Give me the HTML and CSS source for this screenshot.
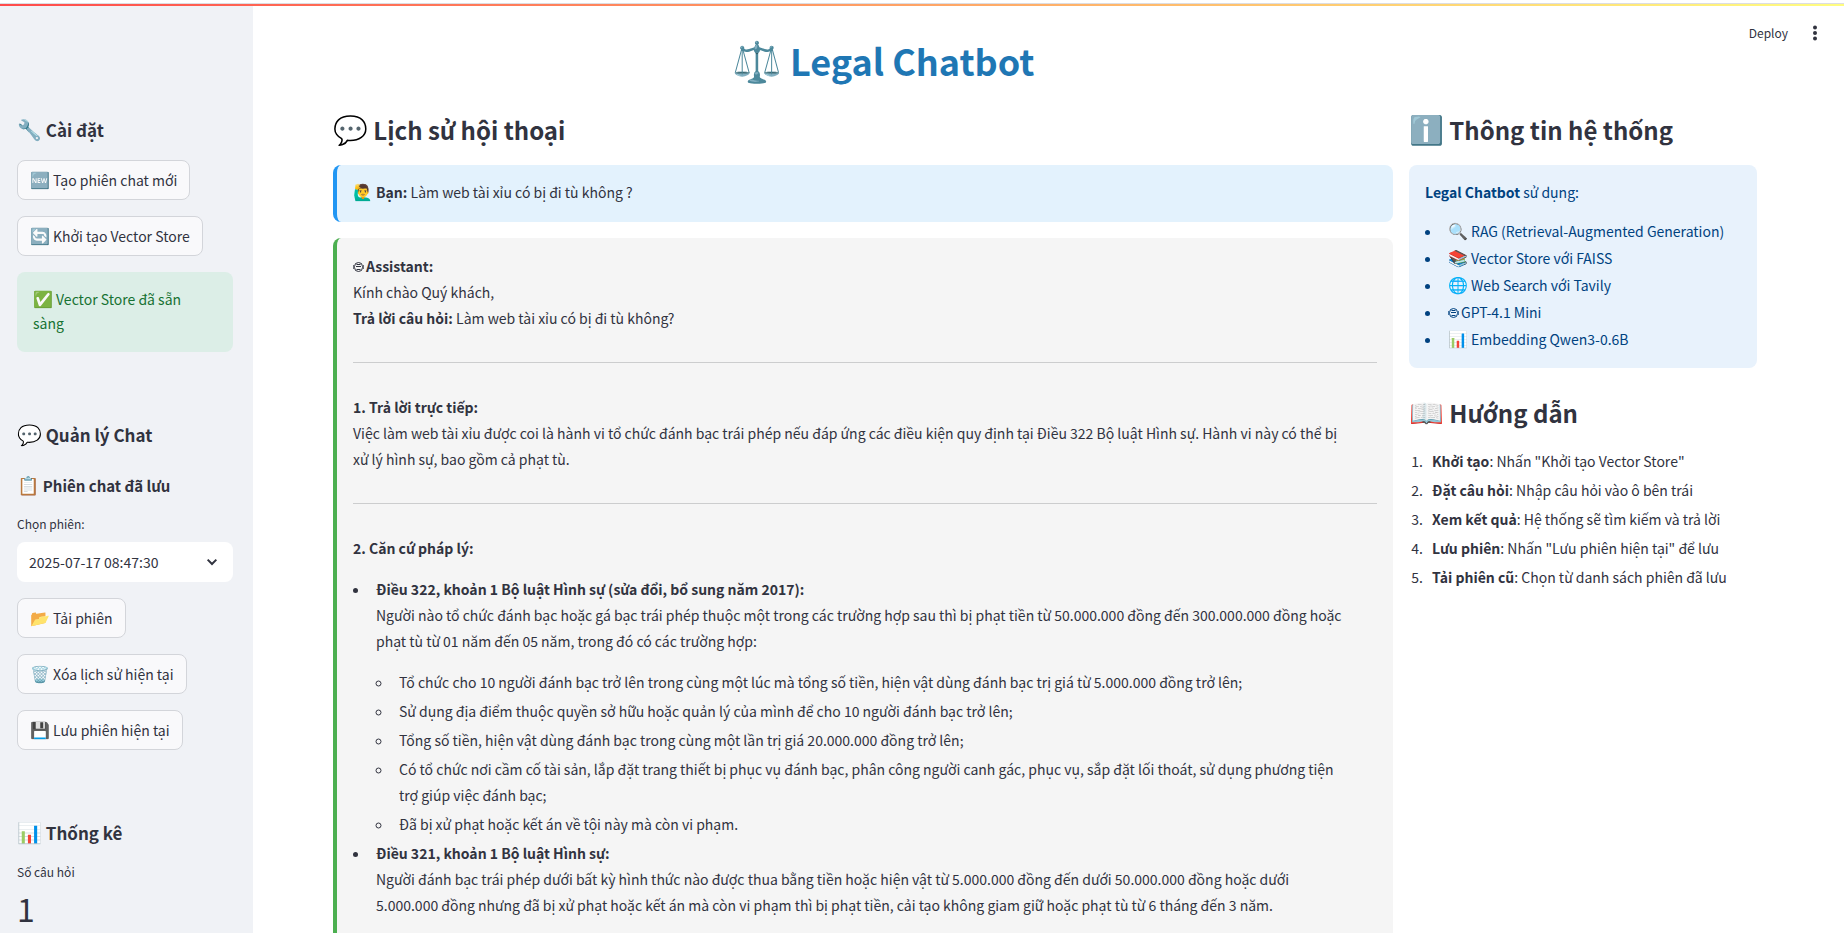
FILE: index.html
```html
<!DOCTYPE html>
<html lang="vi">
<head>
<meta charset="utf-8">
<title>Legal Chatbot</title>
<link rel="stylesheet" href="styles.css">
</head>
<body>
<div class="topbar"></div>
<div class="app">
<aside class="sidebar">
  <h2><span class="emoji">🔧</span> Cài đặt</h2>
  <button type="button"><span class="emoji">🆕</span> Tạo phiên chat mới</button>
  <button type="button"><span class="emoji">🔄</span> Khởi tạo Vector Store</button>
  <div class="success" role="status"><span class="emoji">✅</span> Vector Store đã sẵn sàng</div>
  <h2 class="section"><span class="emoji">💬</span> Quản lý Chat</h2>
  <h3><span class="emoji">📋</span> Phiên chat đã lưu</h3>
  <div class="field">
    <label for="session">Chọn phiên:</label>
    <div class="select-wrap">
      <select id="session"><option>2025-07-17 08:47:30</option></select>
      <svg class="chevron" viewBox="0 0 24 24" aria-hidden="true"><path d="M5.500 8.500 12 15l6.500-6.500" fill="none" stroke="currentColor" stroke-width="3"/></svg>
    </div>
  </div>
  <button type="button"><span class="emoji">📂</span> Tải phiên</button>
  <button type="button"><span class="emoji">🗑️</span> Xóa lịch sử hiện tại</button>
  <button type="button"><span class="emoji">💾</span> Lưu phiên hiện tại</button>
  <h2 class="section"><span class="emoji">📊</span> Thống kê</h2>
  <div class="metric"><div class="metric-label">Số câu hỏi</div><div class="metric-value">1</div></div>
</aside>
<main class="main">
  <div class="toolbar">
    <button type="button" class="plain">Deploy</button>
    <button type="button" class="plain" aria-label="Menu"><svg class="dots" viewBox="0 0 4 16" aria-hidden="true"><circle cx="2" cy="2.500" r="2"/><circle cx="2" cy="8" r="2"/><circle cx="2" cy="13.500" r="2"/></svg></button>
  </div>
  <h1><span class="emoji">⚖️</span> Legal Chatbot</h1>
  <div class="columns">
    <section class="chat">
      <h2><span class="emoji">💬</span> Lịch sử hội thoại</h2>
      <div class="message user"><p><span class="emoji">🙋‍♂️</span> <strong>Bạn:</strong> Làm web tài xỉu có bị đi tù không ?</p></div>
      <div class="message assistant">
        <p><svg class="robot" viewBox="0 0 12 12" aria-hidden="true"><use href="#robot"/></svg><strong>Assistant:</strong><br>Kính chào Quý khách,<br><strong>Trả lời câu hỏi:</strong> Làm web tài xỉu có bị đi tù không?</p>
        <hr>
        <p><strong>1. Trả lời trực tiếp:</strong><br>Việc làm web tài xỉu được coi là hành vi tổ chức đánh bạc trái phép nếu đáp ứng các điều kiện quy định tại Điều 322 Bộ luật Hình sự. Hành vi này có thể bị xử lý hình sự, bao gồm cả phạt tù.</p>
        <hr>
        <p><strong>2. Căn cứ pháp lý:</strong></p>
        <ul>
          <li><p><strong>Điều 322, khoản 1 Bộ luật Hình sự (sửa đổi, bổ sung năm 2017):</strong><br>Người nào tổ chức đánh bạc hoặc gá bạc trái phép thuộc một trong các trường hợp sau thì bị phạt tiền từ 50.000.000 đồng đến 300.000.000 đồng hoặc phạt tù từ 01 năm đến 05 năm, trong đó có các trường hợp:</p>
            <ul>
              <li>Tổ chức cho 10 người đánh bạc trở lên trong cùng một lúc mà tổng số tiền, hiện vật dùng đánh bạc trị giá từ 5.000.000 đồng trở lên;</li>
              <li>Sử dụng địa điểm thuộc quyền sở hữu hoặc quản lý của mình để cho 10 người đánh bạc trở lên;</li>
              <li>Tổng số tiền, hiện vật dùng đánh bạc trong cùng một lần trị giá 20.000.000 đồng trở lên;</li>
              <li>Có tổ chức nơi cầm cố tài sản, lắp đặt trang thiết bị phục vụ đánh bạc, phân công người canh gác, phục vụ, sắp đặt lối thoát, sử dụng phương tiện trợ giúp việc đánh bạc;</li>
              <li>Đã bị xử phạt hoặc kết án về tội này mà còn vi phạm.</li>
            </ul>
          </li>
          <li><p><strong>Điều 321, khoản 1 Bộ luật Hình sự:</strong><br>Người đánh bạc trái phép dưới bất kỳ hình thức nào được thua bằng tiền hoặc hiện vật từ 5.000.000 đồng đến dưới 50.000.000 đồng hoặc dưới 5.000.000 đồng nhưng đã bị xử phạt hoặc kết án mà còn vi phạm thì bị phạt tiền, cải tạo không giam giữ hoặc phạt tù từ 6 tháng đến 3 năm.</p></li>
        </ul>
      </div>
    </section>
    <section class="info">
      <h2><span class="emoji">ℹ️</span> Thông tin hệ thống</h2>
      <div class="info-box">
        <p><strong>Legal Chatbot</strong> sử dụng:</p>
        <ul>
          <li><span class="emoji">🔍</span> RAG (Retrieval-Augmented Generation)</li>
          <li><span class="emoji">📚</span> Vector Store với FAISS</li>
          <li><span class="emoji">🌐</span> Web Search với Tavily</li>
          <li><svg class="robot" viewBox="0 0 12 12" aria-hidden="true"><use href="#robot"/></svg>GPT-4.1 Mini</li>
          <li><span class="emoji">📊</span> Embedding Qwen3-0.6B</li>
        </ul>
      </div>
      <h2><span class="emoji">📖</span> Hướng dẫn</h2>
      <ol>
        <li><strong>Khởi tạo</strong>: Nhấn "Khởi tạo Vector Store"</li>
        <li><strong>Đặt câu hỏi</strong>: Nhập câu hỏi vào ô bên trái</li>
        <li><strong>Xem kết quả</strong>: Hệ thống sẽ tìm kiếm và trả lời</li>
        <li><strong>Lưu phiên</strong>: Nhấn "Lưu phiên hiện tại" để lưu</li>
        <li><strong>Tải phiên cũ</strong>: Chọn từ danh sách phiên đã lưu</li>
      </ol>
    </section>
  </div>
</main>
</div>
<svg class="symbols" aria-hidden="true"><symbol id="robot" viewBox="0 0 12 12"><rect x="1.500" y="1.500" width="8" height="9" rx="4" fill="none" stroke="currentColor"/><path d="M.5 4v4M10.500 4v4" fill="none" stroke="currentColor" opacity=".7"/><path d="M3.500 3.500h4M3 5.500h5M3.500 8.500h4" fill="none" stroke="currentColor"/></symbol></svg>
</body>
</html>
```
FILE: styles.css
```css
* { box-sizing: border-box; }
body {
  margin: 0;
  height: 100vh;
  overflow: hidden;
  display: flex;
  flex-direction: column;
  color: #31333f;
  background: #fff;
  font-family: "Noto Sans CJK JP", "Noto Sans", sans-serif;
  font-size: 14px;
  line-height: 26px;
}
button, select { font: inherit; color: inherit; }
h1, h2, h3, p, ul, ol { margin: 0; }
strong, h2, h3 { font-weight: 600; }
.emoji { font-family: "Noto Color Emoji", sans-serif; font-size: 16px; line-height: 1; }
.topbar {
  flex: none;
  padding-top: 1px;
  border-top: 3px solid #fff;
  background: #dcdde2;
}
.topbar::after {
  content: "";
  display: block;
  height: 2px;
  background: linear-gradient(90deg, #ff4b4b, #fffd80);
}
.app { flex: 1; min-height: 0; display: flex; }

.sidebar {
  width: 253px;
  flex: none;
  padding: 110px 20px 0 17px;
  background: #f0f2f6;
  display: flex;
  flex-direction: column;
  align-items: flex-start;
  gap: 16px;
  overflow: hidden;
}
.sidebar > * { flex-shrink: 0; }
.sidebar h2 { font-size: 17px; line-height: 28px; }
.sidebar h2 .emoji { font-size: 20px; }
.sidebar h3 { margin-top: 8px; font-size: 15px; line-height: 26px; }
.sidebar h3 .emoji { font-size: 18px; }
.sidebar .section { margin-top: 53px; }
.sidebar button {
  height: 40px;
  padding: 0 12px 1px;
  border: 1px solid #d3d5da;
  border-radius: 8px;
  background: #f9f9fb;
  white-space: nowrap;
}
.success {
  width: 100%;
  padding: 15px 24px 17px 16px;
  border-radius: 8px;
  background: #dceee7;
  color: #177233;
  line-height: 24px;
}
.field { width: 100%; }
.field label { display: block; margin-bottom: 9px; font-size: 12px; line-height: 18px; }
.select-wrap { position: relative; }
select {
  appearance: none;
  width: 100%;
  height: 40px;
  padding: 0 12px 1px;
  border: 0;
  border-radius: 8px;
  background: #fff;
}
.chevron { position: absolute; right: 13px; top: 12px; width: 16px; height: 16px; pointer-events: none; }
.metric-label { font-size: 12px; line-height: 18px; }
.metric-value { font-size: 32px; line-height: 54px; }

.main { flex: 1; min-width: 0; padding: 0 87px 0 80px; position: relative; overflow: hidden; }
.toolbar { position: absolute; top: 12px; right: 27px; display: flex; align-items: center; gap: 25px; }
.plain { padding: 0; border: 0; background: none; font-size: 12px; line-height: 30px; display: flex; align-items: center; }
.dots { width: 4px; height: 16px; fill: currentColor; }
h1 {
  width: 77%;
  margin-top: 28px;
  padding-left: 4px;
  font-size: 36px;
  line-height: 52px;
  font-weight: 700;
  color: #1f77b4;
  text-align: center;
}
h1 .emoji { font-size: 40px; }
.columns { display: flex; gap: 16px; margin-top: 24px; }
.chat { width: calc(75% - 8px); }
.info { width: calc(25% - 8px); }
.columns h2 { font-size: 24px; line-height: 40px; margin-bottom: 15px; }
.columns h2 .emoji { font-size: 28px; }

.message { padding: 15px 16px 17px; border-left: 4px solid; border-radius: 8px; margin-bottom: 16px; }
.user { border-color: #2196f3; background: #e3f2fd; }
.user p { line-height: 25px; }
.assistant { border-color: #4caf50; background: #f5f5f5; }
.assistant p, .assistant ul ul { padding-right: 30px; }
hr { border: 0; height: 1px; background: #cccdce; margin: 31px 0; }

ul, ol { padding: 0; }
li { margin-left: 17px; padding-left: 6px; }
li + li { margin-top: 3px; }
.message ul { margin: 15px 0 16px; }
.message ul ul { list-style: circle; margin-bottom: 3px; }
.info-box {
  padding: 15px 16px 17px;
  border-radius: 8px;
  background: #e8f2fc;
  color: #004280;
  line-height: 24px;
  margin-bottom: 25px;
}
.info-box ul { margin-top: 15px; }
.robot { width: 12px; height: 12px; margin-right: 1px; vertical-align: -1px; }
.symbols { display: none; }
```
